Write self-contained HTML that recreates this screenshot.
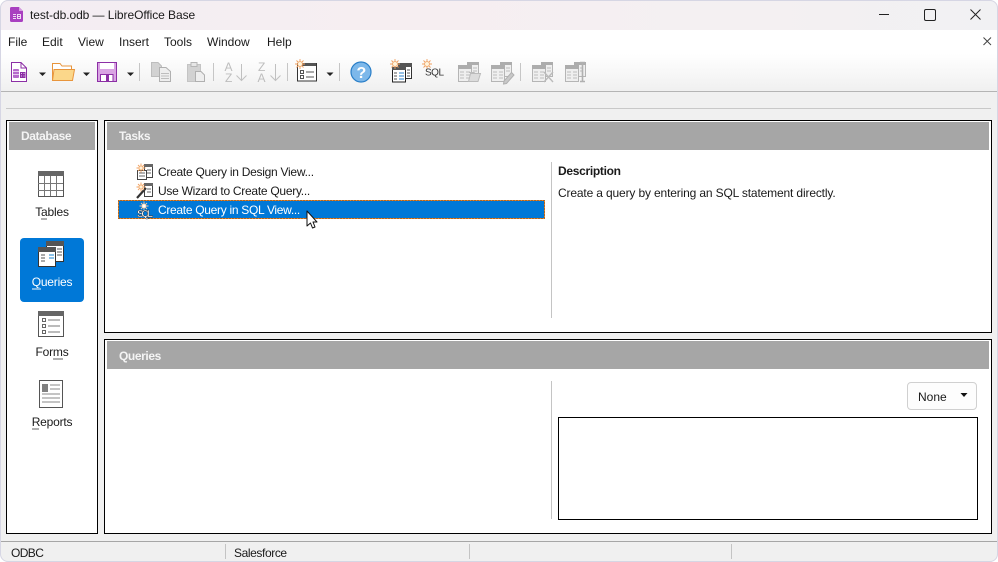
<!DOCTYPE html>
<html><head><meta charset="utf-8"><style>
html,body{margin:0;padding:0;width:998px;height:562px;overflow:hidden;background:#fff}
body{position:relative;font-family:"Liberation Sans",sans-serif;font-size:12px;color:#1a1a1a}
.a{position:absolute}
.t{position:absolute;white-space:nowrap;line-height:16px}
.box{position:absolute;border:1px solid #000;background:#fff;box-sizing:border-box}
.hd{position:absolute;background:#a6a6a6;color:#f4f4f4;font-weight:bold;line-height:28px;box-sizing:border-box;padding-left:12px;letter-spacing:-.4px}
svg{position:absolute;overflow:visible}
.ul{position:absolute;height:2px;background:#b0b0b0}
.sb{text-align:center;left:0;width:104px;letter-spacing:-.2px}
</style></head><body>
<div class="a" style="left:0;top:0;width:998px;height:562px;background:#f0f0f0;border-radius:8px"></div>
<div class="a" style="left:0;top:0;width:998px;height:30px;background:linear-gradient(90deg,#f3edf3,#f6eef1 40%,#f4f0f2 75%,#f1f1f3);border-radius:8px 8px 0 0"></div>
<div class="a" style="left:0;top:30px;width:998px;height:62px;background:linear-gradient(#fff 0,#fff 24px,#f0f0f0 100%);border-bottom:1px solid #b4b4b4;box-sizing:border-box"></div>
<div class="a" style="left:6px;top:108px;width:985px;height:1px;background:#c8c8c8"></div>
<div class="a" style="left:0;top:0;width:998px;height:562px;box-sizing:border-box;border:1px solid #d6d6e4;border-radius:8px"></div>

<!-- title -->
<svg style="left:9px;top:6px" width="16" height="17" viewBox="0 0 16 17"><path d="M1 2.500Q1 1 2.500 1H10L14 5V14.500Q14 16 12.500 16H2.500Q1 16 1 14.500Z" fill="#a93fc0"/><path d="M10 1L14 5H10Z" fill="#d49ae0"/><path d="M4 8h3v1H4zM4 10h3v1H4zM4 12h3v1H4z" fill="#eed7f3"/><path d="M8 8h4v5H8z" fill="#eed7f3"/><path d="M9 9h2v1H9zM9 11h2v1H9z" fill="#a93fc0"/></svg>
<div class="t" style="left:30px;top:7px;letter-spacing:-.07px">test-db.odb — LibreOffice Base</div>
<div class="a" style="left:879px;top:14px;width:10px;height:1px;background:#222"></div>
<div class="a" style="left:924px;top:9px;width:10px;height:10px;border:1px solid #222;border-radius:2px"></div>
<svg style="left:970px;top:9px" width="11" height="11"><path d="M.5.5L10.500 10.500M10.500.5L.5 10.500" stroke="#222" fill="none"/></svg>
<svg style="left:983px;top:37px" width="9" height="9"><path d="M.5.5L8 8M8 .5L.5 8" stroke="#444" fill="none"/></svg>

<!-- menu -->
<div class="t" style="left:8px;top:34px">File</div>
<div class="t" style="left:42px;top:34px">Edit</div>
<div class="t" style="left:78px;top:34px">View</div>
<div class="t" style="left:119px;top:34px">Insert</div>
<div class="t" style="left:164px;top:34px">Tools</div>
<div class="t" style="left:207px;top:34px">Window</div>
<div class="t" style="left:267px;top:34px">Help</div>

<!-- toolbar -->
<svg style="left:0;top:0" width="998" height="562" viewBox="0 0 998 562">
<!-- new db -->
<path d="M11.500 62.500H21L26.500 68V81.500H11.500Z" fill="#fff" stroke="#8c2fa5"/><path d="M21 62.500V68H26.500" fill="none" stroke="#8c2fa5"/>
<rect x="13" y="69" width="6" height="9" rx="1" fill="#b56acb"/><path d="M13 71.500h6M13 74.500h6" stroke="#e6c8ee"/>
<rect x="20" y="72" width="5.500" height="6" fill="#8c2fa5"/><path d="M21 73.500h1M23.500 73.500h1M21 76h1M23.500 76h1" stroke="#e6c8ee"/>
<!-- open -->
<path d="M52.500 80.500V63.500H60L62 66H71.500V69" fill="#fff" stroke="#e8953c"/><path d="M52.500 80.500L54 69.500H74.500L72.500 80.500Z" fill="#fbd78a" stroke="#e8953c"/>
<!-- save -->
<rect x="97.500" y="62.500" width="19" height="19" fill="#d9a4e3" stroke="#8c2fa5"/><rect x="100" y="63" width="14" height="6" fill="#fff"/><rect x="100.500" y="74.500" width="12.500" height="7" fill="#fff" stroke="#8c2fa5"/><rect x="106" y="75" width="3" height="6" fill="#8c2fa5"/>
<!-- dropdown arrows -->
<path d="M39 72.500h7l-3.500 3.500z M83 72.500h7l-3.500 3.500z M127 72.500h7l-3.500 3.500z M326.500 72.500h7l-3.500 3.500z" fill="#222"/>
<!-- seps -->
<path d="M139.500 63V81M213.500 63V81M287.500 63V81M339.500 63V81M520.500 63V81" stroke="#c6c6c6"/>
<!-- copy -->
<path d="M151.500 62.500H158L161.500 66V76.500H151.500Z" fill="#d2d2d2" stroke="#bdbdbd"/><path d="M159.500 67.500H166L170.500 71.500V81.500H159.500Z" fill="#eee" stroke="#b0b0b0"/><path d="M161 73.500h8M161 76h8M161 78.500h8" stroke="#bdbdbd"/>
<!-- paste -->
<rect x="187.500" y="64.500" width="13" height="17" fill="#d2d2d2" stroke="#c4c4c4"/><rect x="191" y="62.500" width="6" height="4" fill="#e6e6e6" stroke="#b5b5b5"/><path d="M195.500 71.500H201L204.500 75V81.500H195.500Z" fill="#eee" stroke="#b0b0b0"/>
<!-- sort -->
<path d="M241.500 64V80.500M236.500 75.500L241.500 80.500L246.500 75.500M275.500 64V80.500M270.500 75.500L275.500 80.500L280.500 75.500" stroke="#c0c0c0" fill="none"/>
<text x="224.500" y="71" font-size="12" fill="#bdbdbd" font-family="Liberation Sans">A</text><text x="225" y="82" font-size="12" fill="#bdbdbd" font-family="Liberation Sans">Z</text>
<text x="258" y="71" font-size="12" fill="#bdbdbd" font-family="Liberation Sans">Z</text><text x="257.500" y="82" font-size="12" fill="#bdbdbd" font-family="Liberation Sans">A</text>
<!-- form new -->
<rect x="297.500" y="63.500" width="19" height="17.500" fill="#fff" stroke="#333"/><rect x="298" y="63" width="18" height="3" fill="#555"/><path d="M300.500 70.500h3v3h-3zM300.500 75.500h3v3h-3z" fill="none" stroke="#555"/><path d="M306 72h8M306 77h8" stroke="#555"/>
<path d="M300 59v10M295 64h10M296.500 60.500l7 7M303.500 60.500l-7 7" stroke="#f0a060" stroke-width=".9"/><circle cx="300" cy="64" r="2.400" fill="#fff4dc" stroke="#f0a060" stroke-width=".8"/>
<!-- help -->
<circle cx="361" cy="72" r="10" fill="#7db8ea" stroke="#2a7fc8" stroke-width="1.200"/>
<text x="356.500" y="78" font-size="16" font-weight="bold" fill="#fff" font-family="Liberation Sans">?</text>
<!-- new query design -->
<rect x="398.500" y="63.500" width="13" height="15" fill="#fff" stroke="#333"/><rect x="398" y="63" width="14" height="4" fill="#555"/><rect x="392.500" y="67.500" width="13" height="14.500" fill="#fff" stroke="#222"/><rect x="392" y="67" width="14" height="3" fill="#555"/><path d="M394 73h3M394 76h3M394 79h3M407 70h3M407 73h3M407 76h3" stroke="#555"/><path d="M399 73h5M399 76h5M399 79h5" stroke="#2a7fc8"/>
<path d="M395 59v10M390 64h10M391.500 60.500l7 7M398.500 60.500l-7 7" stroke="#f0a060" stroke-width=".9"/><circle cx="395" cy="64" r="2.400" fill="#fff4dc" stroke="#f0a060" stroke-width=".8"/>
<!-- sql -->
<path d="M427 59v10M422 64h10M423.500 60.500l7 7M430.500 60.500l-7 7" stroke="#f0a060" stroke-width=".9"/><circle cx="427" cy="64" r="2.400" fill="#fff4dc" stroke="#f0a060" stroke-width=".8"/>
<text x="425" y="75.500" font-size="10" fill="#333" font-family="Liberation Sans" textLength="19">SQL</text>
<!-- gray table icons -->
<g fill="#efefef" stroke="#b5b5b5">
<rect x="467.500" y="62.500" width="11" height="14"/><rect x="458.500" y="65.500" width="13" height="16"/>
<rect x="500.500" y="62.500" width="11" height="14"/><rect x="491.500" y="65.500" width="13" height="16"/>
<rect x="541.500" y="62.500" width="11" height="14"/><rect x="532.500" y="65.500" width="13" height="16"/>
<rect x="574.500" y="62.500" width="11" height="14"/><rect x="565.500" y="65.500" width="13" height="16"/>
</g>
<path d="M467 62h12v3h-12zM500 62h12v3h-12zM541 62h12v3h-12zM574 62h12v3h-12zM458 65h14v4h-14zM491 65h14v4h-14zM532 65h14v4h-14zM565 65h14v4h-14z" fill="#adadad"/>
<path d="M460 72h4M460 75h4M460 78h4M466 72h4M466 75h4M466 78h4M473 68h4M473 71h4M493 72h4M493 75h4M493 78h4M499 72h4M499 75h4M499 78h4M506 68h4M506 71h4M534 72h4M534 75h4M534 78h4M540 72h4M540 75h4M540 78h4M547 68h4M547 71h4M567 72h4M567 75h4M567 78h4M573 72h4M573 75h4M573 78h4M580 68h2M580 71h2" stroke="#bcbcbc"/>
<path d="M470.500 73.500h10l-2.500 8h-9.500z" fill="#dcdcdc" stroke="#bbb"/><path d="M469 72.500h5l1 1" fill="none" stroke="#bbb"/>
<path d="M504 81l7.500-8.500 2.500 2.500-7.500 8.500-3 .5z" fill="#c8c8c8" stroke="#b0b0b0"/>
<path d="M544 72l9 10M553 72l-9 10" stroke="#bbb" stroke-width="1.400"/>
<path d="M580 62.500h5M580 81.500h5M582.500 63v18" stroke="#b0b0b0" stroke-width="1.600"/>
</svg>

<!-- panels -->
<div class="box" style="left:6px;top:120px;width:92px;height:414px"></div>
<div class="hd" style="left:9px;top:122px;width:86px;height:28px">Database</div>
<div class="box" style="left:104px;top:120px;width:888px;height:213px"></div>
<div class="hd" style="left:107px;top:122px;width:882px;height:28px">Tasks</div>
<div class="box" style="left:104px;top:339px;width:888px;height:195px"></div>
<div class="hd" style="left:107px;top:341px;width:882px;height:28px;line-height:30px">Queries</div>

<div class="a" style="left:20px;top:238px;width:64px;height:64px;background:#0078d7;border-radius:4px"></div>

<svg style="left:0;top:0" width="998" height="562" viewBox="0 0 998 562">
<!-- Tables -->
<rect x="38.500" y="171.500" width="25" height="25" fill="#fff" stroke="#555"/><rect x="38" y="171" width="26" height="5" fill="#666"/><path d="M44.500 176v20M50.500 176v20M56.500 176v20M38 183.500h25M38 190.500h25" stroke="#777"/>
<!-- Queries -->
<rect x="46.500" y="241.500" width="17" height="20" fill="#fff" stroke="#333"/><rect x="46" y="241" width="18" height="5" fill="#555"/><rect x="38.500" y="247.500" width="17" height="19" fill="#fff" stroke="#333"/><rect x="38" y="247" width="18" height="5" fill="#555"/>
<path d="M41 255h4M41 258h4M41 261h4M57 249h5M57 252h5M57 255h5" stroke="#555"/><path d="M49 255h5M49 258h5" stroke="#1a86d0"/>
<!-- Forms -->
<rect x="38.500" y="311.500" width="25" height="25" fill="#fff" stroke="#555"/><rect x="38" y="311" width="26" height="5" fill="#666"/>
<path d="M42.500 318.500h3v3h-3zM42.500 324.500h3v3h-3zM42.500 330.500h3v3h-3z" fill="none" stroke="#666"/><path d="M48 320h12M48 326h12M48 332h12" stroke="#777"/>
<!-- Reports -->
<rect x="39.500" y="380.500" width="23" height="27" fill="#fff" stroke="#555"/><rect x="42" y="384" width="6" height="8" fill="#808080"/><path d="M50 385h10M50 389h10M42 394h18M42 398h18M42 402h18" stroke="#888"/>
</svg>
<div class="t sb" style="top:204px">Tables</div><div class="ul" style="left:41px;top:218px;width:6px"></div>
<div class="t sb" style="top:274px;color:#fff">Queries</div><div class="ul" style="left:32px;top:288px;width:9px;background:#7ab8e8"></div>
<div class="t sb" style="top:344px">Forms</div><div class="ul" style="left:53px;top:358px;width:10px"></div>
<div class="t sb" style="top:414px">Reports</div><div class="ul" style="left:32px;top:428px;width:7px"></div>

<!-- tasks -->
<div class="a" style="left:118px;top:200px;width:427px;height:19px;background:#0078d7"></div>
<svg style="left:0;top:0" width="998" height="562" viewBox="0 0 998 562">
<rect x="118.500" y="200.500" width="426" height="18" fill="none" stroke="#5a4a3a"/>
<rect x="118.500" y="200.500" width="426" height="18" fill="none" stroke="#f5851f" stroke-dasharray="2 1"/>
<rect x="144.500" y="164.500" width="8" height="13" fill="#fff" stroke="#444"/><rect x="144" y="164" width="9" height="3" fill="#666"/><rect x="137.500" y="170.500" width="9" height="9" fill="#fff" stroke="#444"/><path d="M139 173h6M139 176h6M147 170h4M147 173h4" stroke="#666"/>
<path d="M141 163.500v9M136.500 168h9M138 165l6 6M144 165l-6 6" stroke="#f0a060" stroke-width=".9"/><circle cx="141" cy="168" r="2" fill="#fff4dc" stroke="#f0a060" stroke-width=".7"/>
<rect x="144.500" y="183.500" width="8" height="13" fill="#fff" stroke="#444"/><rect x="144" y="183" width="9" height="3" fill="#666"/><path d="M147 189h4M147 192h4" stroke="#666"/><path d="M137 198l9-10" stroke="#333" stroke-width="2.200"/>
<path d="M141 182.500v9M136.500 187h9M138 184l6 6M144 184l-6 6" stroke="#f0a060" stroke-width=".9"/><circle cx="141" cy="187" r="2" fill="#fff4dc" stroke="#f0a060" stroke-width=".7"/>
<path d="M144 201.500v9M139.500 206h9M141 203l6 6M147 203l-6 6" stroke="#f6c9a0" stroke-width=".9"/><circle cx="144" cy="206" r="2" fill="#fff" stroke="#f6c9a0" stroke-width=".7"/>
<text x="137" y="217" font-size="10" font-weight="bold" fill="#fff" stroke="#222" stroke-width=".4" font-family="Liberation Sans" textLength="16">SQL</text>
<!-- cursor -->
<path d="M307 211V226L310.500 223L312.500 228L315 227L313 222H317Z" fill="#fff" stroke="#111" stroke-linejoin="round"/>
</svg>
<div class="t" style="left:158px;top:164px;letter-spacing:-.27px">Create Query in Design View...</div>
<div class="t" style="left:158px;top:183px;letter-spacing:-.27px">Use Wizard to Create Query...</div>
<div class="t" style="left:158px;top:202px;color:#fff;letter-spacing:-.3px">Create Query in SQL View...</div>

<div class="a" style="left:551px;top:162px;width:1px;height:156px;background:#c4c4c4"></div>
<div class="t" style="left:558px;top:163px;font-weight:bold;letter-spacing:-.3px">Description</div>
<div class="t" style="left:558px;top:185px;letter-spacing:-.15px">Create a query by entering an SQL statement directly.</div>

<div class="a" style="left:551px;top:381px;width:1px;height:138px;background:#c4c4c4"></div>
<div class="a" style="left:907px;top:382px;width:70px;height:28px;background:#fdfdfd;border:1px solid #d0d0d0;border-radius:4px;box-sizing:border-box"></div>
<div class="t" style="left:918px;top:389px">None</div>
<svg style="left:960px;top:393px" width="9" height="5"><path d="M.5 0h7L4 4z" fill="#111"/></svg>
<div class="box" style="left:558px;top:417px;width:420px;height:103px"></div>

<!-- status -->
<div class="a" style="left:1px;top:541px;width:996px;height:1px;background:#a6a6a6"></div>
<div class="a" style="left:225px;top:544px;width:1px;height:15px;background:#c4c4c4"></div>
<div class="a" style="left:469px;top:544px;width:1px;height:15px;background:#c4c4c4"></div>
<div class="a" style="left:731px;top:544px;width:1px;height:15px;background:#c4c4c4"></div>
<div class="t" style="left:11px;top:545px;letter-spacing:-.6px">ODBC</div>
<div class="t" style="left:234px;top:545px;letter-spacing:-.4px">Salesforce</div>
</body></html>
